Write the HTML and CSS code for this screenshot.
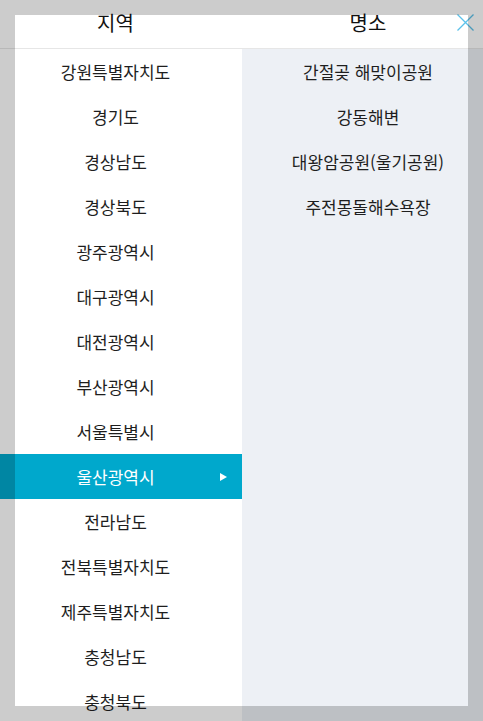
FILE: index.html
```html
<!DOCTYPE html>
<html lang="ko">
<head>
<meta charset="utf-8">
<title>지역 / 명소</title>
<link rel="stylesheet" href="styles.css">
</head>
<body>
<div class="page">
  <header class="head">
    <div class="title title-left">지역</div>
    <div class="title title-right">명소</div>
    <button class="close" aria-label="닫기">
      <svg width="17" height="17" viewBox="0 0 17 17"><path d="M0.5 0.5 L16.5 16.5 M16.5 0.5 L0.5 16.5" stroke="#5cc1ea" stroke-width="1.3" fill="none"/></svg>
    </button>
  </header>
  <div class="cols">
    <ul class="regions">
      <li>강원특별자치도</li>
      <li>경기도</li>
      <li>경상남도</li>
      <li>경상북도</li>
      <li>광주광역시</li>
      <li>대구광역시</li>
      <li>대전광역시</li>
      <li>부산광역시</li>
      <li>서울특별시</li>
      <li class="active">울산광역시</li>
      <li>전라남도</li>
      <li>전북특별자치도</li>
      <li>제주특별자치도</li>
      <li>충청남도</li>
      <li>충청북도</li>
    </ul>
    <ul class="spots">
      <li>간절곶 해맞이공원</li>
      <li>강동해변</li>
      <li>대왕암공원(울기공원)</li>
      <li>주전몽돌해수욕장</li>
    </ul>
  </div>
</div>
<div class="frame"></div>
</body>
</html>
```
FILE: styles.css
```css
html, body {
  margin: 0;
  padding: 0;
  width: 483px;
  height: 721px;
  overflow: hidden;
  background: #ffffff;
  font-family: "Noto Sans CJK KR", "Noto Sans", sans-serif;
  color: #1e1e1e;
}

.page {
  width: 483px;
  height: 721px;
  display: flex;
  flex-direction: column;
}

.head {
  position: relative;
  height: 48px;
  flex: none;
  display: flex;
  border-bottom: 1px solid #e6e6e6;
  background: #ffffff;
}

.title {
  font-size: 20px;
  line-height: 46px;
  text-align: center;
  color: #111111;
}

.title-left {
  width: 231px;
  padding-right: 11px;
}

.title-right {
  flex: 1;
  padding-left: 11px;
}

.close {
  position: absolute;
  left: 457px;
  top: 14px;
  width: 17px;
  height: 17px;
  padding: 0;
  border: 0;
  background: none;
  display: block;
}

.close svg {
  display: block;
}

.cols {
  flex: 1;
  display: flex;
  min-height: 0;
}

.regions, .spots {
  list-style: none;
  margin: 0;
  padding: 0;
}

.regions {
  width: 242px;
  background: #ffffff;
}

.spots {
  flex: 1;
  background: #edf0f5;
}

.regions li, .spots li {
  height: 45px;
  line-height: 45px;
  font-size: 17px;
  text-align: center;
  white-space: nowrap;
}

.regions li {
  padding-right: 11px;
  position: relative;
}

.spots li {
  padding-left: 11px;
}

.regions li.active {
  background: #00a8cc;
  color: #ffffff;
}

.regions li.active::after {
  content: "";
  position: absolute;
  left: 220px;
  top: 19px;
  width: 0;
  height: 0;
  border-top: 4px solid transparent;
  border-bottom: 4px solid transparent;
  border-left: 7px solid #ffffff;
}

.frame {
  position: fixed;
  left: 0;
  top: 0;
  width: 483px;
  height: 721px;
  box-sizing: border-box;
  border: 15px solid rgba(0, 0, 0, 0.2);
  pointer-events: none;
}
```
